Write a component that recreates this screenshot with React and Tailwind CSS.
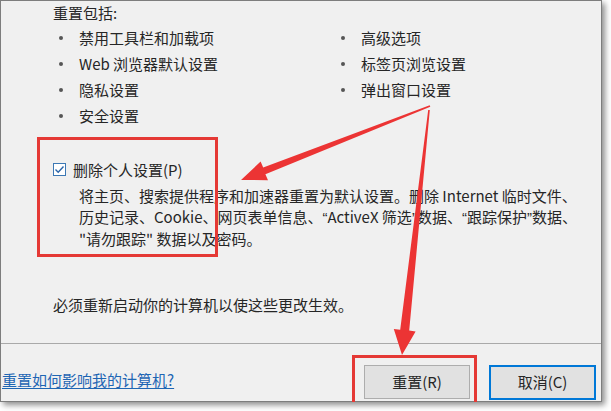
import React from "react";

const leftItems = ["禁用工具栏和加载项", "Web 浏览器默认设置", "隐私设置", "安全设置"];
const rightItems = ["高级选项", "标签页浏览设置", "弹出窗口设置"];

function Bullet({ text }) {
  return (
    <div className="flex items-center h-[26px]">
      <div className="w-[9px] flex justify-center">
        <div className="w-[4px] h-[4px] rounded-full bg-[#555]" />
      </div>
      <span className="ml-[14px]">{text}</span>
    </div>
  );
}

function Q({ c }) {
  return <span className="[font-family:'Liberation_Sans',sans-serif]">{c}</span>;
}

export default function App() {
  return (
    <div className="relative w-[611px] h-[411px] bg-white overflow-hidden [font-family:'Noto_Sans_CJK_SC',sans-serif]">
      <div className="w-[602px] h-[402px] bg-[#f0f0f0] border border-[#7d7d7d] shadow-[3px_3px_6px_rgba(0,0,0,0.45)] flex flex-col text-[15px] text-[#262626]">
        <div className="pl-[52px] h-[24px] leading-[24px]">重置包括:</div>

        <div className="flex pl-[55px]">
          <div className="w-[282px]">
            {leftItems.map((t) => (
              <Bullet key={t} text={t} />
            ))}
          </div>
          <div>
            {rightItems.map((t) => (
              <Bullet key={t} text={t} />
            ))}
          </div>
        </div>

        <div className="mt-[30px] pl-[52px] flex items-center h-[21px]">
          <svg width="13" height="13" viewBox="0 0 13 13">
            <rect x="0.5" y="0.5" width="12" height="12" fill="#fff" stroke="#3c78b4" />
            <path d="M2.5 6.5 L5.2 9.2 L10.5 3.5" fill="none" stroke="#2a64a8" strokeWidth="1.4" />
          </svg>
          <span className="ml-[7px] leading-[21px]">删除个人设置(P)</span>
        </div>

        <div className="mt-[5px] pl-[78px] leading-[21px] whitespace-nowrap">
          <div>将主页、搜索提供程序和加速器重置为默认设置。删除 Internet 临时文件、</div>
          <div>
            历史记录、Cookie、网页表单信息、<Q c="“" />ActiveX 筛选<Q c="”" />数据、<Q c="“" />跟踪保护<Q c="”" />数据、
          </div>
          <div>"请勿跟踪" 数据以及密码。</div>
        </div>

        <div className="mt-[45px] pl-[52px] leading-[21px]">必须重新启动你的计算机以使这些更改生效。</div>

        <div className="mt-[28px] h-px bg-[#a9a9a9]" />

        <div className="flex-1 flex">
          <a className="mt-[25px] ml-[1px] leading-[21px] h-[21px] text-[#1e66b4] underline underline-offset-2">
            重置如何影响我的计算机?
          </a>
          <div className="ml-auto mt-[21px] pr-[5px] flex gap-[19px] items-start">
            <button className="w-[106px] h-[34px] bg-[#e1e1e1] border border-[#adadad] text-[15px] text-[#262626]">
              重置(R)
            </button>
            <button className="w-[107px] h-[35px] bg-[#e1e1e1] border-2 border-[#0078d7] text-[15px] text-[#262626]">
              取消(C)
            </button>
          </div>
        </div>
      </div>

      {/* annotations */}
      <div className="absolute left-[37px] top-[137px] w-[181px] h-[120px] border-[3px] border-[#e53935]" />
      <div className="absolute left-[352px] top-[355px] w-[125px] h-[47px] border-[3px] border-b-0 border-[#e53935]" />
      <svg className="absolute inset-0 pointer-events-none" width="611" height="411" viewBox="0 0 611 411">
        <polygon
          fill="#ec3434"
          points="429.7,105.3 263.2,167.6 260.6,161.6 241,180 268,180.2 265.4,174.2 430.3,106.7"
        />
        <polygon
          fill="#ec3434"
          points="428.2,109.9 400.2,329.8 393.8,329 402,355 415.6,331.4 409.2,330.6 429.8,110.1"
        />
      </svg>
    </div>
  );
}
